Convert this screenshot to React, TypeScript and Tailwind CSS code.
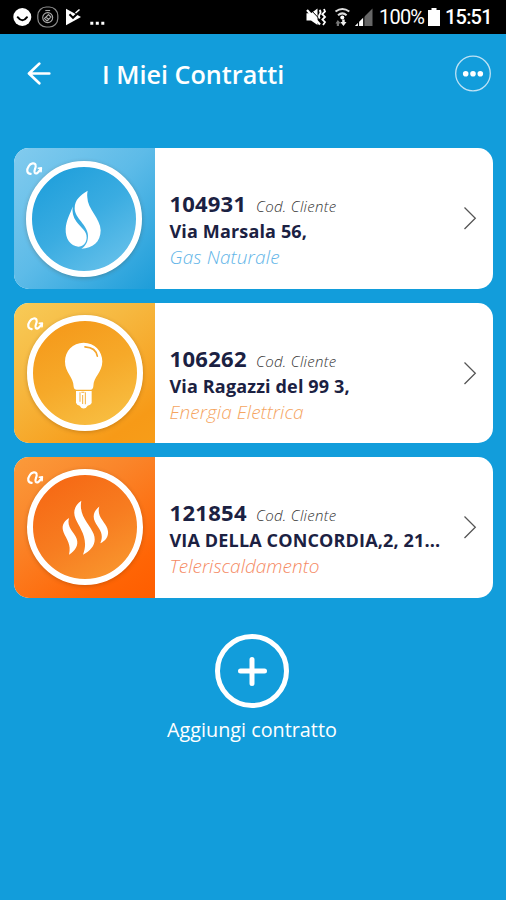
import type { ReactNode } from "react";

type Contract = {
  code: string;
  codeSpacing: string;
  address: string;
  addressClass: string;
  service: string;
  serviceClass: string;
  tileClass: string;
  circleClass: string;
  viewBox: string;
  curlShift: string;
  icon: ReactNode;
};

const contracts: Contract[] = [
  {
    code: "104931",
    codeSpacing: "tracking-[0.2px]",
    address: "Via Marsala 56,",
    addressClass: "tracking-[0.15px]",
    service: "Gas Naturale",
    serviceClass: "text-[#62b5e8] tracking-[0.15px]",
    tileClass: "bg-[linear-gradient(135deg,#82cbee_0%,#5dbbe8_48%,#1d9dd9_100%)]",
    circleClass: "left-[12px] top-[13px] bg-[linear-gradient(145deg,#1f9fdb_8%,#3aace1_50%,#69c2eb_95%)]",
    viewBox: "42 24 423 423",
    curlShift: "translate(-3 0)",
    icon: (
      <>
        <path d="M263 153C240 167 224 181 224 206C224 236 264 256 264 288C264 307 257 319 244 327C278 327 302 307 302 272C302 236 262 208 262 172C261 165 262 158 263 153Z" fill="#fff" />
        <path d="M218 200C216 217 219 231 229 245C243 265 261 273 260 294C259 311 249 321 235 321C211 319 196 298 197 268C198 242 211 222 218 200Z" fill="#fff" />
      </>
    ),
  },
  {
    code: "106262",
    codeSpacing: "tracking-[0.3px]",
    address: "Via Ragazzi del 99 3,",
    addressClass: "tracking-[0.15px]",
    service: "Energia Elettrica",
    serviceClass: "text-[#f5a55f] tracking-[0.05px]",
    tileClass: "bg-[linear-gradient(145deg,#f8cb58_0%,#f6b941_35%,#f79a17_85%,#f79d19_100%)]",
    circleClass: "left-[13px] top-[12px] bg-[linear-gradient(155deg,#f59a1b_10%,#f6a929_50%,#f8c044_95%)]",
    viewBox: "42 24 423 420",
    curlShift: "translate(0 0)",
    icon: (
      <>
        <path d="M251 143C218 143 195 168 195 199C195 233 220 244 221 274Q222 283 230 283H272Q279 283 280 273C281 243 306 233 307 199C307 168 284 143 251 143Z" fill="#fff" />
        <path d="M255 155Q288 157 292 183" stroke="#f5a62d" strokeWidth="5" fill="none" strokeLinecap="round" />
        <path d="M228 287H275V323Q272 330 263 331Q259 339 251 339Q243 339 239 331Q230 329 228 322Z" fill="#fff" />
        <path d="M240 291V319M256 291V327M244 291H253M248 299V326" stroke="#f6b03a" strokeWidth="3" fill="none" />
      </>
    ),
  },
  {
    code: "121854",
    codeSpacing: "tracking-[0.3px]",
    address: "VIA DELLA CONCORDIA,2, 21...",
    addressClass: "tracking-[0.15px]",
    service: "Teleriscaldamento",
    serviceClass: "text-[#f58a63]",
    tileClass: "bg-[linear-gradient(145deg,#fb9b3b_0%,#fa852a_35%,#ff6505_80%,#ff5d00_100%)]",
    circleClass: "left-[13px] top-[12px] bg-[linear-gradient(150deg,#f66a15_12%,#f77c20_52%,#f9982f_95%)]",
    viewBox: "42 21 423 423",
    curlShift: "translate(0 -3)",
    icon: (
      <>
        <path d="M207 205C189 216 184 231 191 248C199 268 215 284 207 315C225 303 237 288 230 267C223 248 199 233 207 205Z" fill="#fff" />
        <path d="M244 153C223 168 218 187 227 208C238 234 268 267 249 315C276 301 291 280 281 253C271 225 235 199 244 153Z" fill="#fff" />
        <path d="M298 170C281 184 277 199 285 216C295 238 314 248 301 281C319 273 329 256 322 236C315 216 289 200 298 170Z" fill="#fff" />
      </>
    ),
  },
];

function StatusBar() {
  return (
    <div className="flex h-[34px] items-center justify-between bg-black pl-[13px] pr-[14px] text-white">
      <div className="flex h-full items-center">
        <svg width="94" height="34" viewBox="0 0 94 34">
          <circle cx="9.3" cy="17" r="9" fill="#fff" />
          <path d="M4.7 17.2Q9.5 23.5 14 17.2" stroke="#000" strokeWidth="2" fill="none" strokeLinecap="round" />
          <rect x="24.8" y="7" width="20" height="20" rx="8.5" stroke="#8c8c8c" strokeWidth="1.2" fill="none" />
          <g stroke="#aaa" strokeWidth="1.1" fill="none">
            <path d="M32.3 10.5H37.1" />
            <circle cx="34.7" cy="17.6" r="5" />
            <path d="M31.5 18.5L35.5 14.5L38 17L34 21ZM33 17L36 20" />
          </g>
          <path d="M53 8.8L68 17L53 25.2Z" fill="#fff" />
          <path d="M56.5 14.2L60 17.8L67.5 10.7" stroke="#000" strokeWidth="2" fill="none" />
          <path d="M62.5 13L66.5 9.5" stroke="#fff" strokeWidth="1.6" />
          <path d="M77.3 21.7h3v3h-3zM82.8 21.7h3v3h-3zM88.3 21.7h3v3h-3z" fill="#fff" />
        </svg>
      </div>
      <div className="flex h-full items-center font-[Roboto,sans-serif] text-[20px] leading-[34px]">
        <svg width="71" height="34" viewBox="304 0 71 34">
          <path d="M305.5 13.2H310L316.5 8.5V25L310 20.5H305.5Z" fill="#fff" />
          <path d="M308.5 8.5L320 20.5" stroke="#000" strokeWidth="1" />
          <path d="M306 10L319 24.5" stroke="#fff" strokeWidth="2.2" />
          <path d="M318.5 10Q320.5 12 318.8 14.2T318.8 18.5M323 9L324 11.5L321.3 14.2L324 17L321.4 19.5L324 22.2L322 25" stroke="#fff" strokeWidth="1.8" fill="none" />
          <g stroke="#ddd" strokeWidth="2" fill="none">
            <path d="M334.5 11.5Q341.4 6.5 348.3 11.5M337 15.3Q341.4 11.5 345.6 15.3" />
          </g>
          <circle cx="341.3" cy="17.6" r="2" fill="#fff" />
          <path d="M336.8 20L339.8 23.5H338V26H335.8V23.5H334.5Z" fill="#777" />
          <path d="M342.5 26L339.3 22H341.2V19.5H343.7V22H345.5Z" fill="#eee" />
          <path d="M354 26L371.5 8.5V26Z" fill="#666" />
          <path d="M354 26L362.5 17.5V26Z" fill="#fff" />
          <path d="M357.5 18V26M362.8 14V26" stroke="#000" strokeWidth="1.2" />
        </svg>
        <span className="ml-[3px] w-[49px] whitespace-nowrap text-[20px] tracking-[-0.8px]">100%</span>
        <svg width="12" height="18" viewBox="0 0 12 18">
          <path d="M3.5 0H8.5V2H12V18H0V2H3.5Z" fill="#fff" />
        </svg>
        <span className="ml-[5px] w-[47px] whitespace-nowrap font-medium tracking-[-0.8px]">15:51</span>
      </div>
    </div>
  );
}

function Header() {
  return (
    <header className="flex h-[80px] items-center px-[14px]">
      <button aria-label="Indietro" className="flex w-[88px] items-center pl-[13px]">
        <svg width="24" height="24" viewBox="0 0 24 24" fill="none" stroke="#fff" strokeWidth="2.7" strokeLinecap="round" strokeLinejoin="round">
          <path d="M12.3 1.6L2 11.5L12.3 21.3M2.5 11.5H22.3" />
        </svg>
      </button>
      <h1 className="grow text-[25.2px] font-semibold leading-[80px] text-white">I Miei Contratti</h1>
      <button aria-label="Altro" className="mr-px">
        <svg className="block" width="36" height="38" viewBox="0 0 36 38">
          <circle cx="18" cy="18.5" r="17.3" stroke="#bee2f5" strokeWidth="1.3" fill="none" />
          <circle cx="10.7" cy="18.7" r="2.8" fill="#fff" />
          <circle cx="18" cy="18.7" r="2.8" fill="#fff" />
          <circle cx="25.3" cy="18.7" r="2.8" fill="#fff" />
        </svg>
      </button>
    </header>
  );
}

function ContractCard({ c }: { c: Contract }) {
  return (
    <article className="flex h-[140.5px] overflow-hidden rounded-[15px] bg-white">
      <div className={`relative h-full w-[141px] shrink-0 ${c.tileClass}`}>
        <div className={`absolute size-[116px] rounded-full border-6 border-white shadow-[0_1px_4px_rgba(80,40,0,0.28)] ${c.circleClass}`} />
        <svg className="absolute inset-0 size-full" viewBox={c.viewBox} preserveAspectRatio="none">
          <g transform={c.curlShift} fill="none" stroke="#fff" strokeWidth="6.5" strokeLinecap="round" strokeLinejoin="round">
            <path d="M95 102C83 101 82 89 89 79C95 69 108 67 110 76C112 84 103 92 107 98C112 105 119 96 125 88" />
            <path d="M118 85L127 84L126 95" strokeWidth="5" />
          </g>
          {c.icon}
        </svg>
      </div>
      <div className="flex min-w-0 grow flex-col pl-[14.5px] pt-[41px]">
        <div className="flex h-[29px] items-baseline whitespace-nowrap leading-[29px]">
          <span className={`w-[86.5px] text-[22px] font-bold text-[#1b2142] ${c.codeSpacing}`}>{c.code}</span>
          <span className="text-[15px] font-light italic tracking-[0.3px] text-[#333]">Cod. Cliente</span>
        </div>
        <div className={`h-[26px] whitespace-nowrap text-[18px] font-bold leading-[26px] text-[#1b2142] ${c.addressClass}`}>{c.address}</div>
        <div className={`h-[26px] whitespace-nowrap text-[19px] font-light italic leading-[26px] ${c.serviceClass}`}>{c.service}</div>
      </div>
      <svg className="mr-[16px] mt-[58px] shrink-0" width="14" height="24" viewBox="0 0 14 24" fill="none" stroke="#555" strokeWidth="1.3">
        <path d="M1.5 1.5L12.3 12.2L1.5 23" />
      </svg>
    </article>
  );
}

export default function App() {
  return (
    <div className="h-[900px] w-[506px] overflow-hidden bg-[#129ddb] font-['Open_Sans',sans-serif]">
      <StatusBar />
      <Header />
      <main className="flex flex-col gap-[14px] pl-[14px] pr-[13.5px] pt-[34px]">
        {contracts.map((c) => (
          <ContractCard key={c.code} c={c} />
        ))}
      </main>
      <button className="ml-[167px] mt-[35px] flex w-[170px] flex-col items-center text-white">
        <svg width="76" height="76" viewBox="0 0 76 76" fill="none" stroke="#fff">
          <circle cx="38" cy="38" r="34.5" strokeWidth="5" />
          <path d="M38 26.5V50.5M26.5 38H50.5" strokeWidth="5" strokeLinecap="round" />
        </svg>
        <span className="mt-[7px] whitespace-nowrap text-[19.8px] leading-[28px]">Aggiungi contratto</span>
      </button>
    </div>
  );
}
